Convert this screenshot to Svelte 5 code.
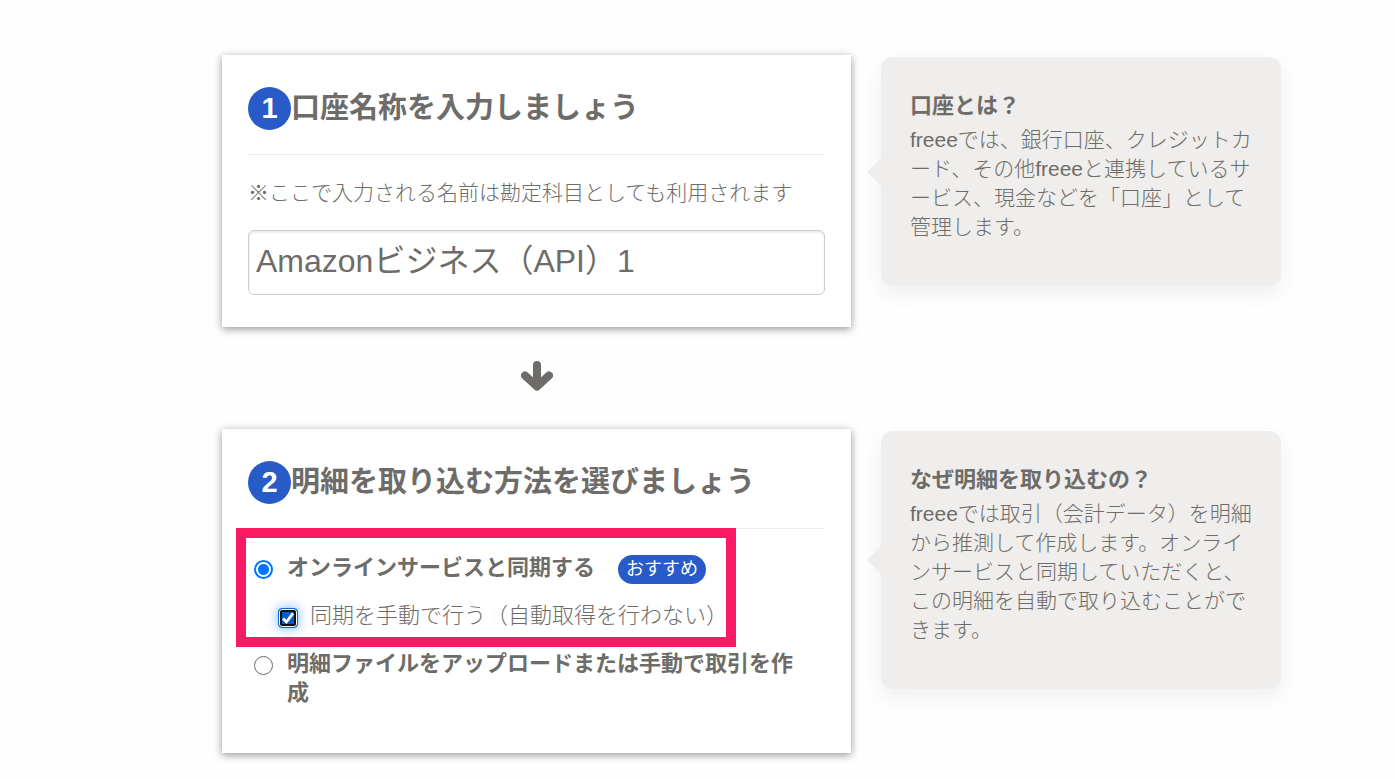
<script>
  let accountName = $state('Amazonビジネス（API）1');
  let method = $state('online');
  let manual = $state(true);
</script>

<main>
  <section class="card">
    <h2><span class="num">1</span>口座名称を入力しましょう</h2>
    <label class="note" for="account-name">※ここで入力される名前は勘定科目としても利用されます</label>
    <input id="account-name" class="text" type="text" bind:value={accountName} />
  </section>
  <aside>
    <h3>口座とは？</h3>
    <p>freeeでは、銀行口座、クレジットカード、その他freeeと連携しているサービス、現金などを「口座」として管理します。</p>
  </aside>

  <div class="next">
    <svg viewBox="0 0 32 30" width="32" height="30" aria-hidden="true">
      <path d="M16 4V14M4 14.5 16 25.5 28 14.5" fill="none" stroke="#6e6c69" stroke-width="8" stroke-linecap="round" stroke-linejoin="round" />
      <path d="M12 4V22L16 26 20 22V4Z" fill="#6e6c69" />
    </svg>
  </div>

  <section class="card second">
    <h2><span class="num">2</span>明細を取り込む方法を選びましょう</h2>
    <div class="featured">
      <div class="option">
        <input id="online" type="radio" name="method" value="online" bind:group={method} />
        <label for="online">オンラインサービスと同期する</label>
        <span class="badge">おすすめ</span>
      </div>
      <div class="option sub">
        <span class="tick">
          <input id="manual" type="checkbox" bind:checked={manual} />
          <svg viewBox="0 0 20 20" aria-hidden="true"><path d="M5 10.6 8.4 14 15 5.4" fill="none" stroke="#fff" stroke-width="2.8" /></svg>
        </span>
        <label for="manual">同期を手動で行う（自動取得を行わない）</label>
      </div>
    </div>
    <div class="option">
      <input id="upload" type="radio" name="method" value="upload" bind:group={method} />
      <label for="upload">明細ファイルをアップロードまたは手動で取引を作成</label>
    </div>
  </section>
  <aside>
    <h3>なぜ明細を取り込むの？</h3>
    <p>freeeでは取引（会計データ）を明細から推測して作成します。オンラインサービスと同期していただくと、この明細を自動で取り込むことができます。</p>
  </aside>
</main>

<style>
  :global(body) {
    background: #fefefe;
  }
  main {
    display: grid;
    grid-template-columns: minmax(0, 629fr) minmax(0, 400fr);
    column-gap: 30px;
    align-items: start;
    padding: 55px 114px 24px 222px;
    color: #6e6c69;
    font-family: "Liberation Sans", "Noto Sans CJK JP", sans-serif;
    font-size: 21px;
    font-weight: 300;
    line-height: 29px;
  }
  h2, h3, p {
    margin: 0;
  }
  input {
    box-sizing: border-box;
    margin: 0;
  }
  .card {
    padding: 32px 26px;
    background: #fff;
    box-shadow: 0 2px 8px rgba(0, 0, 0, 0.42);
  }
  .second {
    padding-bottom: 46px;
  }
  h2 {
    display: flex;
    align-items: center;
    padding-bottom: 24px;
    border-bottom: 1px solid #ececec;
    font-size: 29px;
    line-height: 43px;
  }
  .num {
    width: 43px;
    height: 43px;
    border-radius: 50%;
    background: #285ac8;
    color: #fff;
    text-align: center;
  }
  .note {
    display: block;
    margin: 23px 0;
  }
  .text {
    display: block;
    width: 100%;
    height: 65px;
    padding: 0 7px 10px;
    border: 1px solid #ccc;
    border-radius: 6px;
    box-shadow: inset 0 2px 2px rgba(0, 0, 0, 0.08);
    color: inherit;
    font: inherit;
    font-size: 32px;
    font-weight: 400;
  }
  aside {
    position: relative;
    margin-top: 2px;
    padding: 34px 28px 45px 29px;
    border-radius: 12px;
    background: #efeeec;
    box-shadow: 0 8px 20px rgba(60, 40, 40, 0.07);
  }
  aside::before {
    content: "";
    position: absolute;
    top: 50%;
    right: 100%;
    margin-top: -14px;
    border: 14px solid transparent;
    border-right-color: #efeeec;
    border-left: 0;
  }
  h3 {
    margin-bottom: 5px;
    font-size: 22px;
  }
  p {
    word-break: break-all;
    line-break: loose;
  }
  .next {
    grid-column: 1;
    padding: 34px 0 38px;
    line-height: 0;
    text-align: center;
  }
  .next + .card {
    grid-column: 1;
  }
  .featured {
    position: relative;
    margin: 24px 0 19px;
  }
  .featured::after {
    content: "";
    position: absolute;
    inset: -25px 89px -17px -12px;
    border: 10px solid #fa1a64;
    pointer-events: none;
  }
  .option {
    display: flex;
    align-items: flex-start;
    padding: 0 16px 0 6px;
    font-size: 22px;
    font-weight: bold;
  }
  .option input[type="radio"] {
    appearance: none;
    flex: none;
    width: 19px;
    height: 19px;
    margin: 7px 14px 0 0;
    border: 1px solid #6a6a6a;
    border-radius: 50%;
    background: #fff;
  }
  .option input[type="radio"]:checked {
    border: 2px solid #0075ff;
    background: radial-gradient(circle, #0075ff 5px, #fff 6px);
  }
  .sub {
    margin-top: 17px;
    padding-left: 30px;
    font-weight: 300;
  }
  .badge {
    margin: 2px 0 0 23px;
    padding: 0 8px;
    border-radius: 15px;
    background: #285ac8;
    color: #fff;
    font-size: 18px;
    font-weight: 400;
    white-space: nowrap;
  }
  .tick {
    position: relative;
    flex: none;
    width: 20px;
    height: 20px;
    margin: 7px 12px 0 0;
  }
  .tick input {
    appearance: none;
    display: block;
    width: 20px;
    height: 20px;
    border: 1px solid #0a6cda;
    border-radius: 4px;
    background: #fff;
    box-shadow: inset 0 0 0 1px #fff, inset 0 0 0 3px #101010, 0 0 12px rgba(50, 150, 240, 0.7);
  }
  .tick input:checked {
    background: #0a5cc8;
  }
  .tick svg {
    position: absolute;
    inset: 0;
    pointer-events: none;
  }
  .tick input:not(:checked) + svg {
    display: none;
  }
</style>
